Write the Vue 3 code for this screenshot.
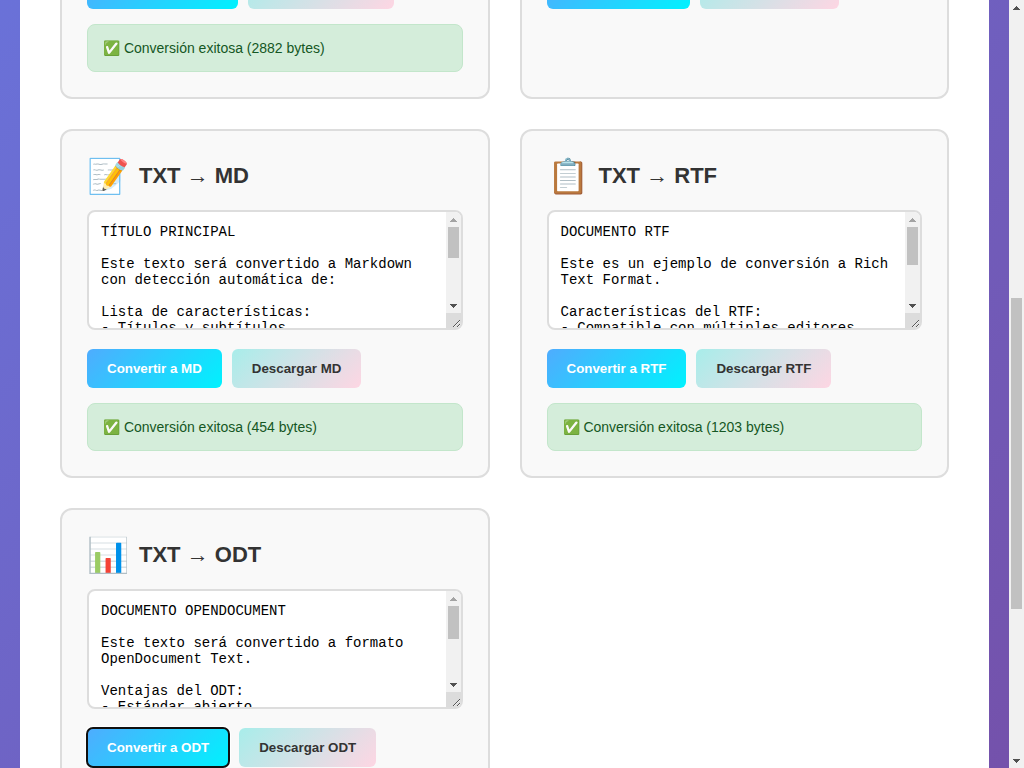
<script setup>
import { ref, reactive, onMounted } from 'vue'

const page = ref(null)
const sources = ref([])
const pageScroll = reactive({ top: 0, view: 1, total: 1 })

const cards = reactive([
  { format: 'MD', icon: '📝', bytes: 454, scroll: { top: 0, view: 1, total: 1 }, text: 'TÍTULO PRINCIPAL\n\nEste texto será convertido a Markdown con detección automática de:\n\nLista de características:\n- Títulos y subtítulos' + '\n'.repeat(8) },
  { format: 'RTF', icon: '📋', bytes: 1203, scroll: { top: 0, view: 1, total: 1 }, text: 'DOCUMENTO RTF\n\nEste es un ejemplo de conversión a Rich Text Format.\n\nCaracterísticas del RTF:\n- Compatible con múltiples editores' + '\n'.repeat(5) },
  { format: 'ODT', icon: '📊', bytes: null, scroll: { top: 0, view: 1, total: 1 }, text: 'DOCUMENTO OPENDOCUMENT\n\nEste texto será convertido a formato OpenDocument Text.\n\nVentajas del ODT:\n- Estándar abierto' + '\n'.repeat(7) }
])

function measure(el, state) {
  state.top = el.scrollTop
  state.view = el.clientHeight
  state.total = el.scrollHeight
}

function thumbStyle(state) {
  return {
    top: (100 * state.top) / state.total + '%',
    height: (100 * state.view) / state.total + '%'
  }
}

onMounted(() => {
  page.value.scrollTop = 699
  measure(page.value, pageScroll)
  sources.value.forEach((el, i) => measure(el, cards[i].scroll))
  document.getElementById('convert-ODT').focus({ preventScroll: true })
})
</script>

<template>
  <div class="window">
    <div ref="page" class="page" @scroll="measure(page, pageScroll)">
      <div class="backdrop">
        <main class="panel">
          <section class="grid">
            <article class="card">
              <div class="actions">
                <button class="btn convert">Convertir a HTML</button>
                <button class="btn download">Descargar HTML</button>
              </div>
              <div class="status">✅ Conversión exitosa (2882 bytes)</div>
            </article>
            <article class="card">
              <div class="actions">
                <button class="btn convert">Convertir a DOC</button>
                <button class="btn download">Descargar DOC</button>
              </div>
            </article>
            <article v-for="c in cards" :key="c.format" class="card">
              <div class="head">
                <span class="icon">{{ c.icon }}</span>
                <h2 :id="'title-' + c.format" class="title">TXT → {{ c.format }}</h2>
              </div>
              <div class="editor">
                <textarea ref="sources" class="source" :aria-labelledby="'title-' + c.format" :value="c.text" @scroll="measure($event.target, c.scroll)"></textarea>
                <div class="bar" aria-hidden="true">
                  <svg class="step" :class="{ off: c.scroll.top === 0 }" viewBox="0 0 15 15"><path d="M4 10h7v-1h-1v-1h-1v-1h-1v-1h-1v1h-1v1h-1v1h-1z" /></svg>
                  <div class="track"><div class="thumb" :style="thumbStyle(c.scroll)"></div></div>
                  <svg class="step" viewBox="0 0 15 15"><path d="M4 6h7v1h-1v1h-1v1h-1v1h-1v-1h-1v-1h-1v-1h-1z" /></svg>
                  <div class="corner"></div>
                </div>
              </div>
              <div class="actions">
                <button :id="'convert-' + c.format" class="btn convert">Convertir a {{ c.format }}</button>
                <button class="btn download">Descargar {{ c.format }}</button>
              </div>
              <div v-if="c.bytes" class="status">✅ Conversión exitosa ({{ c.bytes }} bytes)</div>
            </article>
          </section>
        </main>
      </div>
    </div>
    <div class="bar" aria-hidden="true">
      <svg class="step" viewBox="0 0 15 15"><path d="M4 10h7v-1h-1v-1h-1v-1h-1v-1h-1v1h-1v1h-1v1h-1z" /></svg>
      <div class="track"><div class="thumb" :style="thumbStyle(pageScroll)"></div></div>
      <svg class="step" viewBox="0 0 15 15"><path d="M4 6h7v1h-1v1h-1v1h-1v1h-1v-1h-1v-1h-1v-1h-1z" /></svg>
    </div>
  </div>
</template>

<style>
body {
  margin: 0;
}
</style>

<style scoped>
* {
  box-sizing: border-box;
}
.window {
  display: flex;
  height: 100vh;
  font-family: "Liberation Sans", Arial, sans-serif;
  color: #333;
}
.page {
  flex: 1;
  min-width: 0;
  overflow-y: auto;
  scrollbar-width: none;
}
.backdrop {
  min-height: 1822px;
  padding: 20px;
  display: flex;
  background: linear-gradient(135deg, #667eea 0%, #764ba2 100%);
}
.panel {
  flex: 1;
  min-width: 0;
  padding: 622px 40px 40px;
  border-radius: 20px;
  background: #fff;
}
.grid {
  display: grid;
  grid-template-columns: 1fr 1fr;
  gap: 30px;
}
.card {
  min-width: 0;
  padding: 25px;
  border: 2px solid #ddd;
  border-radius: 12px;
  background: #f9f9f9;
}
.head {
  display: flex;
  align-items: center;
  gap: 10px;
  margin-bottom: 14px;
}
.icon {
  font-size: 34px;
}
.title {
  margin: 0;
  font-size: 22px;
  font-weight: bold;
}
.editor {
  display: flex;
  height: 120px;
  margin-bottom: 19px;
  overflow: hidden;
  border: 2px solid #ddd;
  border-radius: 8px;
  background: #fff;
  resize: vertical;
}
.source {
  flex: 1;
  min-width: 0;
  padding: 12px;
  border: none;
  outline: none;
  background: transparent;
  color: #000;
  font-family: "Liberation Mono", monospace;
  font-size: 14px;
  resize: none;
  scrollbar-width: none;
}
.bar {
  display: flex;
  flex-direction: column;
  flex: none;
  width: 15px;
  background: #f1f1f1;
}
.step {
  flex: none;
  width: 15px;
  height: 15px;
  fill: #505050;
}
.step.off {
  fill: #a3a3a3;
}
.track {
  position: relative;
  flex: 1;
}
.thumb {
  position: absolute;
  left: 2px;
  right: 2px;
  background: #c1c1c1;
}
.corner {
  flex: none;
  height: 15px;
  background: #dcdcdc;
}
.actions {
  display: flex;
  gap: 10px;
}
.btn {
  padding: 12px 20px;
  border: none;
  border-radius: 6px;
  font-family: inherit;
  font-weight: bold;
  cursor: pointer;
}
.convert {
  background: linear-gradient(135deg, #4facfe 0%, #00f2fe 100%);
  color: #fff;
}
.download {
  background: linear-gradient(135deg, #a8edea 0%, #fed6e3 100%);
  color: #333;
}
.status {
  margin-top: 15px;
  padding: 15px;
  border: 1px solid #c3e6cb;
  border-radius: 8px;
  background: #d4edda;
  color: #155724;
  font-size: 14px;
}
</style>
